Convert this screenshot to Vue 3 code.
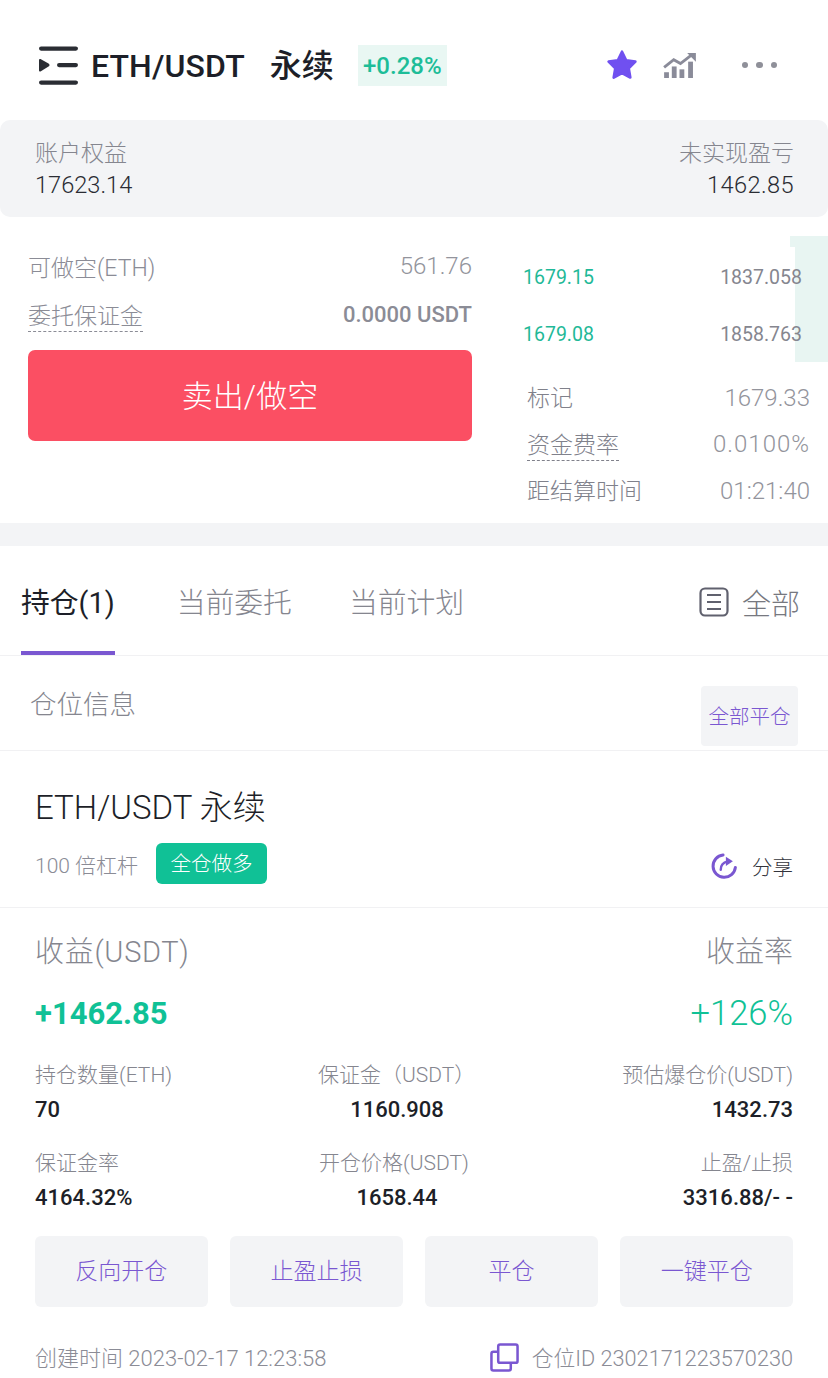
<script setup>
const orders = [
  { price: "1679.15", size: "1837.058" },
  { price: "1679.08", size: "1858.763" },
];

const funding = [
  { label: "标记", value: "1679.33" },
  { label: "资金费率", value: "0.0100%", dashed: true },
  { label: "距结算时间", value: "01:21:40" },
];

const stats = [
  { label: "持仓数量(ETH)", value: "70" },
  { label: "保证金（USDT）", value: "1160.908" },
  { label: "预估爆仓价(USDT)", value: "1432.73" },
  { label: "保证金率", value: "4164.32%" },
  { label: "开仓价格(USDT)", value: "1658.44" },
  { label: "止盈/止损", value: "3316.88/- -" },
];

const actions = ["反向开仓", "止盈止损", "平仓", "一键平仓"];
</script>

<template>
  <div class="page">
    <header class="top">
      <svg class="menu-icon" viewBox="0 0 39 39">
        <rect x="0" y="0.5" width="39" height="4.2" rx="2.1" />
        <rect x="18" y="17" width="21" height="4.2" rx="2.1" />
        <rect x="0" y="34.5" width="39" height="4.2" rx="2.1" />
        <path d="M0 14 Q0 12.6 1.5 13 L9.5 17.4 Q11.5 19 9.5 20.6 L1.5 25.4 Q0 25.8 0 24.4 Z" />
      </svg>
      <span class="pair">ETH/USDT</span>
      <span class="pair-cn">永续</span>
      <span class="change">+0.28%</span>
      <div class="top-icons">
        <svg class="star" viewBox="0 0 32 32">
          <path d="M16 3.5 L19.9 11.6 L28.6 12.8 L22.3 19 L23.8 27.8 L16 23.6 L8.2 27.8 L9.7 19 L3.4 12.8 L12.1 11.6 Z" />
        </svg>
        <svg class="trend" viewBox="0 0 34 26">
          <path class="trend-line" d="M1 15 L11 7 L18 11 L29 2.5" />
          <path class="trend-head" d="M25 0 H34 V9 Z" />
          <rect x="1" y="20" width="5" height="6" />
          <rect x="9" y="14" width="5" height="12" />
          <rect x="17" y="17" width="5" height="9" />
          <rect x="26" y="9" width="5" height="17" />
        </svg>
        <div class="dots"><i></i><i></i><i></i></div>
      </div>
    </header>

    <section class="account">
      <div>
        <div class="account-label">账户权益</div>
        <div class="account-value">17623.14</div>
      </div>
      <div class="right">
        <div class="account-label">未实现盈亏</div>
        <div class="account-value">1462.85</div>
      </div>
    </section>

    <section class="trade">
      <div class="trade-left">
        <div class="trade-row first">
          <span class="muted">可做空(ETH)</span>
          <span class="light">561.76</span>
        </div>
        <div class="trade-row">
          <span class="muted dashed">委托保证金</span>
          <span class="margin">0.0000 USDT</span>
        </div>
        <button class="sell">卖出/做空</button>
      </div>
      <div class="trade-right">
        <div class="depth-top"></div>
        <div class="depth"></div>
        <div v-for="o in orders" :key="o.price" class="order">
          <span class="order-price">{{ o.price }}</span>
          <span class="order-size">{{ o.size }}</span>
        </div>
        <div class="funding">
          <div v-for="f in funding" :key="f.label" class="funding-row">
            <span class="funding-label" :class="{ dashed: f.dashed }">{{ f.label }}</span>
            <span class="light" :class="{ wide: f.dashed }">{{ f.value }}</span>
          </div>
        </div>
      </div>
    </section>

    <div class="gap"></div>

    <nav class="tabs">
      <div class="tab active">持仓(1)</div>
      <div class="tab">当前委托</div>
      <div class="tab">当前计划</div>
      <div class="tab-all">
        <svg class="list-icon" viewBox="0 0 30 30">
          <rect x="1.5" y="1.5" width="27" height="27" rx="4.5" />
          <path d="M8 8 H22 M8 15 H22 M8 22 H22" />
        </svg>
        <span>全部</span>
      </div>
    </nav>

    <div class="pos-head">
      <span class="pos-title">仓位信息</span>
      <button class="close-all">全部平仓</button>
    </div>

    <div class="pos-name">
      <div class="pos-pair">ETH/USDT 永续</div>
      <div class="pos-meta">
        <span class="leverage">100 倍杠杆</span>
        <span class="tag">全仓做多</span>
        <span class="share">
          <svg class="share-icon" viewBox="0 0 30 30">
            <path class="share-arc" d="M14 3.2 A12 12 0 1 0 27.2 16.5" />
            <path class="share-arc thin" d="M11.5 19 Q11.5 11.5 19 10" />
            <path class="share-head" d="M17 5 L24.5 10 L17 15 Z" />
          </svg>
          <span>分享</span>
        </span>
      </div>
    </div>

    <div class="pos-body">
      <div class="pnl-labels">
        <span class="pnl-title">收益(USDT)</span>
        <span>收益率</span>
      </div>
      <div class="pnl-values">
        <span class="pnl">+1462.85</span>
        <span class="pnl-rate">+126%</span>
      </div>
      <div class="stats">
        <div v-for="s in stats" :key="s.label" class="stat">
          <div class="stat-label">{{ s.label }}</div>
          <div class="stat-value">{{ s.value }}</div>
        </div>
      </div>
      <div class="actions">
        <button v-for="a in actions" :key="a" class="action">{{ a }}</button>
      </div>
      <div class="foot">
        <span class="foot-time">创建时间 2023-02-17 12:23:58</span>
        <span class="foot-id">
          <svg class="copy-icon" viewBox="0 0 30 30">
            <rect x="8.5" y="1.5" width="20" height="19" rx="2" />
            <path d="M8.5 9 H3.5 Q1.5 9 1.5 11 V26.5 Q1.5 28.5 3.5 28.5 H19.5 Q21.5 28.5 21.5 26.5 V20.5" />
          </svg>
          <span>仓位ID 2302171223570230</span>
        </span>
      </div>
    </div>
  </div>
</template>

<style>
html,
body {
  margin: 0;
  background: #fff;
}
</style>

<style scoped>
.page {
  width: 828px;
  height: 1378px;
  overflow: hidden;
  background: #fff;
  font-family: Roboto, "Noto Sans CJK SC", sans-serif;
  color: #1c1e26;
}

button {
  border: 0;
  font-family: inherit;
  padding: 0;
}

/* HEADER */
.top {
  height: 120px;
  box-sizing: border-box;
  padding: 46px 0 0 39px;
  display: flex;
  align-items: flex-start;
}

.menu-icon {
  width: 39px;
  height: 39px;
  fill: #2a2d33;
  flex: none;
}

.pair {
  margin-left: 13px;
  font-size: 32px;
  line-height: 40px;
  font-weight: 500;
  letter-spacing: 0.1px;
  color: #1d1f28;
}

.pair-cn {
  margin-left: 25px;
  font-size: 32px;
  line-height: 40px;
  font-weight: 500;
  color: #1d1f28;
}

.change {
  margin: -1px 0 0 24px;
  width: 89px;
  height: 41px;
  line-height: 43px;
  text-align: center;
  background: #e9f7f3;
  color: #1dbd98;
  font-size: 24px;
  font-weight: 500;
}

.top-icons {
  display: flex;
  align-items: center;
  margin: -1px 0 0 158px;
  height: 40px;
}

.star {
  width: 34px;
  height: 34px;
  fill: #7050f0;
  stroke: #7050f0;
  stroke-width: 2.5;
  stroke-linejoin: round;
}

.trend {
  margin-left: 24px;
  width: 33px;
  height: 25px;
  fill: #8a8b99;
}

.trend-line {
  fill: none;
  stroke: #8a8b99;
  stroke-width: 3;
}

.dots {
  margin-left: 46px;
  display: flex;
  gap: 8px;
}

.dots i {
  width: 6.5px;
  height: 6.5px;
  border-radius: 50%;
  background: #8f9099;
}

/* ACCOUNT */
.account {
  height: 97px;
  box-sizing: border-box;
  padding: 19px 34px 0 35px;
  display: flex;
  justify-content: space-between;
  background: #f3f4f6;
  border-radius: 10px;
}

.right {
  text-align: right;
}

.right .account-value {
  letter-spacing: 0.4px;
}

.account-label {
  font-size: 23px;
  line-height: 30px;
  color: #85868f;
  font-weight: 300;
}

.account-value {
  font-size: 23.6px;
  line-height: 32px;
  color: #2a2c33;
  font-weight: 300;
}

/* TRADE */
.trade {
  height: 306px;
  box-sizing: border-box;
  display: flex;
  padding-left: 28px;
  position: relative;
}

.trade-left {
  width: 444px;
}

.trade-row {
  display: flex;
  justify-content: space-between;
  align-items: center;
  height: 48px;
}

.trade-row.first {
  margin-top: 25px;
}

.muted {
  font-size: 23px;
  color: #8b8c96;
  font-weight: 300;
}

.light {
  font-size: 24px;
  color: #93949c;
  font-weight: 300;
}

.light.wide {
  letter-spacing: 1px;
}

.dashed {
  text-decoration: underline dashed 1px;
  text-underline-offset: 7px;
  text-decoration-skip-ink: none;
}

.margin {
  font-size: 22px;
  font-weight: 500;
  color: #8b8c96;
}

.sell {
  display: block;
  width: 100%;
  height: 91px;
  margin-top: 12px;
  padding-bottom: 4px;
  background: #fb4f63;
  border-radius: 7px;
  color: #fff;
  font-size: 31px;
  font-weight: 300;
}

.trade-right {
  flex: 1;
  padding: 32px 18px 0 51px;
  min-width: 0;
}

.depth-top {
  position: absolute;
  top: 19px;
  right: 0;
  width: 38px;
  height: 11px;
  background: #e8f5f2;
}

.depth {
  position: absolute;
  top: 30px;
  right: 0;
  width: 33px;
  height: 115px;
  background: #e8f5f2;
}

.order {
  position: relative;
  display: flex;
  justify-content: space-between;
  align-items: center;
  height: 57px;
  padding-right: 8px;
}

.order-price {
  font-size: 19.5px;
  font-weight: 400;
  color: #1fb998;
}

.order-size {
  font-size: 19.5px;
  font-weight: 400;
  color: #85868f;
}

.funding {
  margin-top: 10px;
  padding-left: 4px;
}

.funding-row {
  display: flex;
  justify-content: space-between;
  align-items: center;
  height: 46.5px;
}

.funding-row .light {
  padding-top: 3px;
}

.funding-label {
  font-size: 23px;
  color: #80818b;
  font-weight: 300;
}

/* GAP */
.gap {
  height: 23px;
  background: #f3f4f6;
}

/* TABS */
.tabs {
  height: 110px;
  box-sizing: border-box;
  display: flex;
  padding: 0 28px 0 21px;
  border-bottom: 1px solid #f1f1f3;
}

.tab {
  margin-right: 57px;
  height: 109px;
  line-height: 114px;
  font-size: 28.8px;
  font-weight: 300;
  color: #85868f;
  box-sizing: border-box;
}

.tab.active {
  margin-right: 62px;
  color: #1d1f28;
  font-weight: 400;
  border-bottom: 4px solid #7a57d1;
}

.tab:nth-child(3) {
  margin-right: 0;
}

.tab-all {
  margin-left: auto;
  display: flex;
  align-items: center;
  height: 112px;
  gap: 13px;
  font-size: 29px;
  font-weight: 300;
  color: #77787f;
}

.list-icon {
  width: 30px;
  height: 30px;
  fill: none;
  stroke: #60616e;
  stroke-width: 2.2;
}

/* POSITION HEAD */
.pos-head {
  height: 95px;
  box-sizing: border-box;
  display: flex;
  justify-content: space-between;
  padding: 30px 30px 0;
  border-bottom: 1px solid #f1f1f3;
}

.pos-title {
  font-size: 26.5px;
  line-height: 38px;
  font-weight: 300;
  color: #85868f;
}

.close-all {
  width: 97px;
  height: 60px;
  background: #f3f4f6;
  border-radius: 4px;
  color: #7a57d1;
  font-size: 20.5px;
  font-weight: 300;
  line-height: 62px;
}

/* POSITION NAME */
.pos-name {
  height: 157px;
  box-sizing: border-box;
  padding: 35px 35px 0;
  border-bottom: 1px solid #f1f1f3;
}

.pos-pair {
  font-size: 33px;
  line-height: 44px;
  font-weight: 300;
  color: #1d1f28;
}

.pos-meta {
  margin-top: 13px;
  display: flex;
  align-items: center;
}

.leverage {
  font-size: 21px;
  font-weight: 300;
  color: #8b8c96;
}

.tag {
  margin-left: 18px;
  width: 111px;
  height: 41px;
  line-height: 43px;
  text-align: center;
  background: #10c196;
  border-radius: 6px;
  color: #fff;
  font-size: 20.5px;
  font-weight: 300;
}

.share {
  margin-left: auto;
  display: flex;
  align-items: center;
  gap: 14px;
  padding-top: 5px;
  font-size: 20.5px;
  font-weight: 300;
  color: #33343c;
}

.share-icon {
  width: 28px;
  height: 28px;
}

.share-arc {
  fill: none;
  stroke: #7a57d1;
  stroke-width: 3.2;
  stroke-linecap: round;
}

.share-arc.thin {
  stroke-width: 2.6;
}

.share-head {
  fill: #7a57d1;
}

/* POSITION BODY */
.pos-body {
  padding: 24px 35px 0;
}

.pnl-labels {
  display: flex;
  justify-content: space-between;
  font-size: 29px;
  line-height: 40px;
  font-weight: 300;
  color: #85868f;
}

.pnl-title {
  letter-spacing: 0.7px;
}

.pnl-values {
  margin-top: 18px;
  display: flex;
  justify-content: space-between;
  align-items: center;
  height: 46px;
}

.pnl {
  font-size: 31px;
  font-weight: 700;
  color: #10c196;
}

.pnl-rate {
  font-size: 34.5px;
  font-weight: 300;
  color: #10c196;
}

.stats {
  margin-top: 23px;
  display: grid;
  grid-template-columns: 283px 152px 1fr;
  row-gap: 21px;
}

.stat:nth-child(3n + 2) {
  text-align: center;
}

.stat:nth-child(3n + 2) .stat-value {
  padding-left: 6px;
}

.stat:nth-child(3n) {
  text-align: right;
}

.stat-label {
  font-size: 21px;
  line-height: 32px;
  font-weight: 300;
  color: #85868f;
  white-space: nowrap;
}

.stat-value {
  margin-top: 3px;
  font-size: 22px;
  line-height: 32px;
  font-weight: 500;
  color: #1d1f28;
  white-space: nowrap;
}

.actions {
  margin-top: 22px;
  display: grid;
  grid-template-columns: repeat(4, 172.5px);
  justify-content: space-between;
}

.action {
  height: 71px;
  padding-bottom: 5px;
  background: #f3f4f6;
  border-radius: 6px;
  color: #7a57d1;
  font-size: 23px;
  font-weight: 300;
}

.foot {
  margin-top: 33px;
  display: flex;
  justify-content: space-between;
  align-items: center;
  font-weight: 300;
  color: #8b8c96;
}

.foot-time {
  font-size: 22px;
}

.foot-id {
  display: flex;
  align-items: center;
  gap: 13px;
  font-size: 21.7px;
}

.copy-icon {
  width: 29px;
  height: 29px;
  margin-top: 3px;
  fill: none;
  stroke: #7a57d1;
  stroke-width: 2.6;
}
</style>
